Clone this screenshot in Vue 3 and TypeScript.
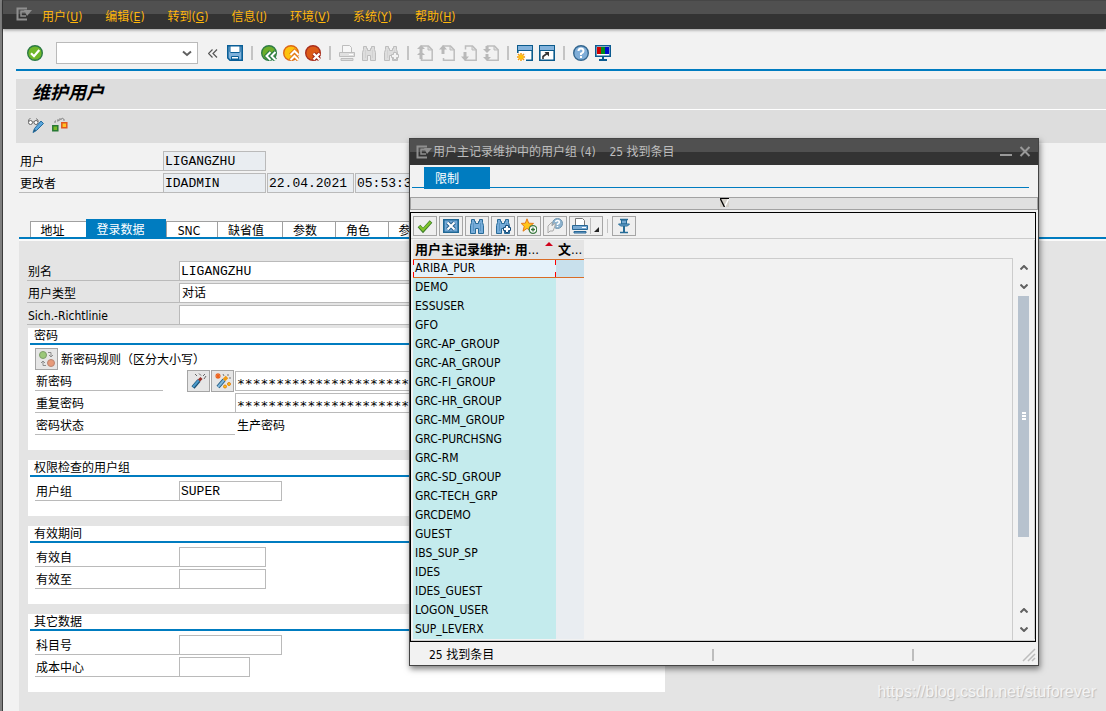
<script setup lang="ts">
import { ref } from 'vue'

const page = '<path d="M4.500 4.500V1h7l3.700 3.700V15.200h-10.700V13" fill="#f2f2f2" stroke="#bdbdbd" stroke-width="1.500"/><path d="M11 1v4h4z" fill="#dcdcdc" stroke="#bdbdbd"/>'
const binoculars = '<path d="M2.500 1.500h3v2h1v2h3v-2h1v-2h3v3l1 3v8h-5v-5h-3v5h-5v-8l1-3z"/><path d="M4.500 5v8M11.500 5v8" stroke-opacity=".35"/>'

const icons: Record<string, string> = {
  menu: '<path d="M11 1.500H1.500v11H11M4.500 4.500h5" fill="none" stroke="#8f8f8f" stroke-width="2"/><path d="M5 4.500V9h5" fill="none" stroke="#8f8f8f" stroke-width="1.500"/><path d="M8 3h8l-5 6z" fill="#8f8f8f"/>',
  ok: '<circle cx="8" cy="8" r="7.300" fill="#6fb72b" stroke="#2c7a45" stroke-width="1.400"/><path d="M4 8.200l3 3L12.300 5" fill="none" stroke="#fff" stroke-width="2.200"/>',
  save: '<path d="M.8.8h14.400v14.400H3L.8 13z" fill="#7fb1da" stroke="#0a5f97" stroke-width="1.600"/><path d="M3 1h10v5.500q0 1-1 1H4q-1 0-1-1z" fill="#fff" stroke="#0a5f97"/><path d="M4.500 11.500h7V15h-7z" fill="#fff" stroke="#0a5f97"/><path d="M4 14.500h8" stroke="#0a5f97" stroke-width="2"/>',
  back: '<circle cx="8" cy="8" r="7.300" fill="#6cae2a" stroke="#2f7c46" stroke-width="1.400"/><path d="M9.500 6.500L5.500 11l4 4M14.500 6.500l-4 4.500 4 4" fill="none" stroke="#287a42" stroke-width="4"/><path d="M9.500 7l-4 4 4 4M14.500 7l-4 4 4 4" fill="none" stroke="#fff" stroke-width="2"/>',
  exit: '<circle cx="8" cy="8" r="7.300" fill="#fdc20d" stroke="#dd6716" stroke-width="1.400"/><path d="M7.500 10l4-4 4 4M7.500 15l4-4 4 4" fill="none" stroke="#e27a16" stroke-width="4"/><path d="M7.500 10l4-4 4 4M7.500 15l4-4 4 4" fill="none" stroke="#fff" stroke-width="2"/>',
  cancel: '<circle cx="8" cy="8" r="7.300" fill="#dc5b17" stroke="#a92e1d" stroke-width="1.400"/><path d="M8.500 8.500l6 6M14.500 8.500l-6 6" fill="none" stroke="#9f291a" stroke-width="4.200"/><path d="M8.500 8.500l6 6M14.500 8.500l-6 6" fill="none" stroke="#fff" stroke-width="2.300"/>',
  print: '<path d="M3.500 7V.5h7l2 2V7" fill="#f7f7f7" stroke="#bdbdbd"/><path d="M.5 7.500h15v4H.5z" fill="#e0e0e0" stroke="#bdbdbd"/><path d="M2 13.500h12v2H2z" fill="#ddd" stroke="#bdbdbd"/><path d="M10 9.500h4" stroke="#fff"/>',
  find: `<g fill="#ddd" stroke="#bdbdbd">${binoculars}</g>`,
  findNext: `<g fill="#ddd" stroke="#bdbdbd">${binoculars}<path d="M10.500 7.500h3v2h2v3h-2v2h-3v-2h-2v-3h2z" fill="#f4f4f4"/></g>`,
  first: `${page}<path d="M4 0l4 4H5.500v3h-3V4H0zM4 6l4 4H5.500v4h-3v-4H0z" fill="#b9b9b9"/>`,
  previous: `${page}<path d="M4 0l4 4.500H5.500V9h-3V4.500H0z" fill="#b9b9b9"/>`,
  next: `${page}<path d="M4 16L0 11.500h2.500V7h3v4.500H8z" fill="#b9b9b9"/>`,
  last: `${page}<path d="M4 8L0 4h2.500V1h3v3H8zM4 16l-4-4h2.500V9h3v3H8z" fill="#b9b9b9"/>`,
  session: '<path d="M.8.8h14.400v14.400H.8z" fill="#fff" stroke="#0c5b8c" stroke-width="1.600"/><path d="M1 1h14v4H1z" fill="#83b3dc"/><path d="M1 5.500h14" stroke="#0c5b8c"/><path d="M0 8h9v8H0z" fill="#fafafa"/><path d="M4 8v8M0 12h8M1 9l6 6M7 9l-6 6" stroke="#f29a0c" stroke-width="1.500"/><circle cx="4" cy="12" r="2.300" fill="#ffc20c"/>',
  shortcut: '<path d="M.8.8h14.400v14.400H.8z" fill="#fff" stroke="#0c5b8c" stroke-width="1.600"/><path d="M1 1h14v4H1z" fill="#83b3dc"/><path d="M1 5.500h14" stroke="#0c5b8c"/><path d="M4 14v-2.500L8 8.500" fill="none" stroke="#333" stroke-width="1.600"/><path d="M5.500 7H10v4.500z" fill="#333"/>',
  help: '<circle cx="8" cy="8" r="7.300" fill="#80aed8" stroke="#34678f" stroke-width="1.400"/><path d="M5.500 6q0-2.500 2.500-2.500T10.500 6Q10.500 7.500 8 8.700V10M8 11v2" fill="none" stroke="#fff" stroke-width="2"/>',
  monitor: '<path d="M.8.8h14.400v10.400H.8z" fill="#fff" stroke="#0b5b90" stroke-width="1.600"/><path d="M2 2h4v7H2z" fill="#d00000"/><path d="M6 2h4v7H6z" fill="#008c1a"/><path d="M10 2h4v7h-4z" fill="#000bc9"/><path d="M8 11v3M4 15h8" stroke="#0b5b90" stroke-width="2"/>',
  glasses: '<circle cx="2.500" cy="5.500" r="2" fill="#fff" stroke="#666"/><circle cx="8" cy="5.500" r="2" fill="#fff" stroke="#666"/><path d="M.5 5V3l2-2M4.500 5h1.500M10 5V3L8 1.500" fill="none" stroke="#777"/><path d="M13 4l2.500 2.500-7 7-3.500 2 1.500-4z" fill="#5ba6dc" stroke="#236b9d"/><path d="M5.500 14.800l1.400-2.500 1 1.200z" fill="#174461"/>',
  other: '<path d="M3 6V4h3V2h6v4M6 4l5-3" fill="none" stroke="#888" stroke-dasharray="3 1"/><path d="M.8 8.800h5v5h-5z" fill="#78b928" stroke="#287934" stroke-width="1.500"/><path d="M9.800 5.800h5v5h-5z" fill="#ffc425" stroke="#e1571d" stroke-width="1.500"/>',
  rules: '<circle cx="4" cy="4" r="3.500" fill="#9bc879" stroke="#7c9d68"/><circle cx="12" cy="12" r="3.500" fill="#e79a79" stroke="#b98472"/><path d="M9 1.500h3v4M10 4l2 2 2-2M7 14.500H4v-4M2 12l2-2 2 2" fill="none" stroke="#8c8c8c"/>',
  wand: '<path d="M2 14.500l6-7" stroke="#184f73" stroke-width="4"/><path d="M2 14l6-7" stroke="#4b9aca" stroke-width="2"/><path d="M8 7.500L10.500 5" stroke="#963028" stroke-width="3"/><path d="M4 1l2 2M8 .5l2 2M12 3l2-2M13 6l2-3" stroke="#666"/>',
  generate: '<path d="M3 14l6-7" stroke="#245e86" stroke-width="4"/><path d="M3 14l6-7" stroke="#80b8dc" stroke-width="2"/><path d="M9 7l3-3" stroke="#f09a13" stroke-width="3.500"/><path d="M3 0v6M0 3h6M1 1l4 4M5 1L1 5" stroke="#ed641f" stroke-width="1.200"/><path d="M8 1l1 2M13 1v2M14 5h2" stroke="#777"/><circle cx="10" cy="13.500" r="1.500" fill="#ffc20c" stroke="#e0841b"/><circle cx="14" cy="11" r="1.500" fill="#ffc20c" stroke="#e0841b"/>',
  tick: '<path d="M2 8l4 4.500L14 3.500" fill="none" stroke="#40802b" stroke-width="3.600"/><path d="M2.500 8.300L6 12l7.500-8" fill="none" stroke="#82c52b" stroke-width="2"/>',
  close: '<path d="M.8 1.800h14.400v12.400H.8z" fill="#72a8d6" stroke="#1f6794" stroke-width="1.600"/><path d="M4.500 4.500l7 7M11.500 4.500l-7 7" stroke="#2b628e" stroke-width="4"/><path d="M4.500 4.500l7 7M11.500 4.500l-7 7" stroke="#fff" stroke-width="2"/>',
  findBlue: `<g fill="#76acd9" stroke="#286b98">${binoculars}</g>`,
  findNextBlue: `<g fill="#76acd9" stroke="#286b98">${binoculars}<path d="M10.500 7.500h3v2h2v3h-2v2h-3v-2h-2v-3h2z" fill="#fff" stroke="#164c7b"/></g>`,
  favorite: '<path d="M6 .8l1.700 4.400 4.800.2-3.700 3 1.300 4.800L6 10.400 2 13.200l1.200-4.800-3-3 4.100-.2z" fill="#ffc51b" stroke="#e57918"/><circle cx="12" cy="11.500" r="3.800" fill="#fff" stroke="#3d7b43" stroke-width="1.300"/><path d="M12 9.500v4M10 11.500h4" stroke="#347338" stroke-width="1.300"/>',
  contextHelp: '<circle cx="10.500" cy="5.500" r="5" fill="#8fb4cf" stroke="#7096b0"/><path d="M8.700 4q0-1.500 1.800-1.500T12.300 4.200q0 1-1.800 2V7M10.500 8v1" fill="none" stroke="#fff" stroke-width="1.500"/><path d="M1 14V8l4-4v4l3-3v3l-2 5H3l-2 2z" fill="#eee" stroke="#aaa"/>',
  printBlue: '<path d="M3.500 7V.5h7l2 2V7" fill="#fff" stroke="#777"/><path d="M.5 7.500h15v4H.5z" fill="#78a9d2" stroke="#286795"/><path d="M2 13.500h12v1.500H2z" fill="#79a9d4" stroke="#286795"/><path d="M10 9.500h4" stroke="#fff"/>',
  pin: '<path d="M5.500 2v4h5V2z" fill="#75a9d2" stroke="#246b96"/><path d="M4 1.500h8" stroke="#246b96" stroke-width="1.500"/><path d="M2.500 6l2 2h7l2-2z" fill="#75a9d2" stroke="#246b96"/><path d="M8 8v6" stroke="#246b96" stroke-width="2"/><path d="M4 14.500h8" stroke="#246b96" stroke-width="1.500"/>',
}

const menus = [
  ['用户', 'U'], ['编辑', 'E'], ['转到', 'G'], ['信息', 'I'], ['环境', 'V'], ['系统', 'Y'], ['帮助', 'H'],
]
const toolGroups = [
  [['save', '保存']],
  [['back', '返回'], ['exit', '退出'], ['cancel', '取消']],
  [['print', '打印'], ['find', '查找'], ['findNext', '查找下一个']],
  [['first', '第一页'], ['previous', '上一页'], ['next', '下一页'], ['last', '最后一页']],
  [['session', '新建会话'], ['shortcut', '创建快捷方式']],
  [['help', '帮助'], ['monitor', '本地布局']],
]
const tabs = [
  { text: '地址', cls: 'w56' }, { text: '登录数据', cls: 'w80' }, { text: 'SNC', cls: 'w51' },
  { text: '缺省值', cls: 'w65' }, { text: '参数', cls: 'w53' }, { text: '角色', cls: 'w53' }, { text: '参数文件', cls: 'w80' },
]
const activeTab = ref('登录数据')

const lowerGroups = [
  { title: '权限检查的用户组', fields: [{ id: 'group', label: '用户组', value: 'SUPER', cls: 'wide' }] },
  { title: '有效期间', fields: [{ id: 'from', label: '有效自', value: '', cls: 'date' }, { id: 'to', label: '有效至', value: '', cls: 'date' }] },
  { title: '其它数据', fields: [{ id: 'account', label: '科目号', value: '', cls: 'wide' }, { id: 'cost', label: '成本中心', value: '', cls: 'short' }] },
]
const stars = '*'.repeat(40)

const dialogTitle = '用户主记录维护中的用户组 (4)    25 找到条目'
const hitTools = [
  ['tick', '复制'], ['close', '关闭'], ['findBlue', '查找'], ['findNextBlue', '查找下一个'], ['favorite', '添加到收藏'], ['contextHelp', '帮助'],
]
const rows = [
  'ARIBA_PUR', 'DEMO', 'ESSUSER', 'GFO', 'GRC-AP_GROUP', 'GRC-AR_GROUP', 'GRC-FI_GROUP', 'GRC-HR_GROUP', 'GRC-MM_GROUP',
  'GRC-PURCHSNG', 'GRC-RM', 'GRC-SD_GROUP', 'GRC-TECH_GRP', 'GRCDEMO', 'GUEST', 'IBS_SUP_SP', 'IDES', 'IDES_GUEST',
  'LOGON_USER', 'SUP_LEVERX',
]
const selected = ref('ARIBA_PUR')
</script>

<template>
  <div class="app">
    <nav class="menubar">
      <svg class="menu-icon" viewBox="0 0 16 14" v-html="icons.menu"></svg>
      <button v-for="m in menus" :key="m[1]" class="menu">{{ m[0] }}(<u>{{ m[1] }}</u>)</button>
    </nav>

    <div class="main">
      <div class="toolbar">
        <button class="tool ok" aria-label="确认"><svg viewBox="0 0 16 16" v-html="icons.ok"></svg></button>
        <div class="combo">
          <select aria-label="命令"><option></option></select>
          <svg viewBox="0 0 10 7"><path d="M1 1.500l4 3.500 4-3.500" fill="none" stroke="#606060" stroke-width="2" /></svg>
        </div>
        <button class="collapse" aria-label="收起">
          <svg viewBox="0 0 10 9"><path d="M4.500 .5l-4 4 4 4M9 .5l-4 4 4 4" fill="none" stroke="#555" stroke-width="1.200" /></svg>
        </button>
        <template v-for="(g, i) in toolGroups" :key="i">
          <span v-if="i > 0" class="sep"></span>
          <button v-for="t in g" :key="t[0]" class="tool" :aria-label="t[1]"><svg viewBox="0 0 16 16" v-html="icons[t[0]]"></svg></button>
        </template>
      </div>

      <header class="heading"><h1>维护用户</h1></header>
      <div class="actions">
        <button class="tool" aria-label="显示/更改"><svg viewBox="0 0 16 16" v-html="icons.glasses"></svg></button>
        <button class="tool" aria-label="其他用户"><svg viewBox="0 0 16 16" v-html="icons.other"></svg></button>
      </div>

      <section class="identity">
        <div class="row"><label for="user">用户</label><input id="user" class="ro wide" value="LIGANGZHU" readonly /></div>
        <div class="row">
          <label for="changed">更改者</label><input id="changed" class="ro wide" value="IDADMIN" readonly />
          <input class="ro date next" aria-label="更改日期" value="22.04.2021" readonly />
          <input class="ro date next" aria-label="更改时间" value="05:53:39" readonly />
        </div>
      </section>

      <div class="tabs" role="tablist">
        <button
          v-for="t in tabs" :key="t.text" role="tab" class="tab" :class="[t.cls, { active: t.text === activeTab }]"
          :aria-selected="t.text === activeTab" @click="activeTab = t.text"
        >{{ t.text }}</button>
      </div>

      <section class="panel">
        <div class="top-fields">
          <div class="row"><label for="alias">别名</label><input id="alias" class="full" value="LIGANGZHU" /></div>
          <div class="row">
            <label for="type">用户类型</label>
            <select id="type" class="full"><option>对话</option></select>
          </div>
          <div class="row"><label for="policy">Sich.-Richtlinie</label><input id="policy" class="full" /></div>
        </div>

        <fieldset class="group">
          <legend>密码</legend>
          <div class="rules">
            <button class="square" aria-label="切换密码规则"><svg viewBox="0 0 16 16" v-html="icons.rules"></svg></button>
            <span>新密码规则（区分大小写）</span>
          </div>
          <div class="row new-password">
            <label for="pw1">新密码</label>
            <div class="pw-tools">
              <button class="square" aria-label="向导"><svg viewBox="0 0 16 16" v-html="icons.wand"></svg></button>
              <button class="square" aria-label="生成密码"><svg viewBox="0 0 16 16" v-html="icons.generate"></svg></button>
            </div>
            <input id="pw1" class="full secret" :value="stars" />
          </div>
          <div class="row long"><label for="pw2">重复密码</label><input id="pw2" class="full secret" :value="stars" /></div>
          <div class="row long"><span class="label">密码状态</span><span class="plain">生产密码</span></div>
        </fieldset>

        <fieldset v-for="g in lowerGroups" :key="g.title" class="group">
          <legend>{{ g.title }}</legend>
          <div class="fields">
            <div v-for="f in g.fields" :key="f.id" class="row">
              <label :for="f.id">{{ f.label }}</label><input :id="f.id" :class="f.cls" :value="f.value" />
            </div>
          </div>
        </fieldset>
      </section>
    </div>

    <div class="dialog" role="dialog" aria-labelledby="dialog-title">
      <div class="titlebar">
        <svg class="menu-icon" viewBox="0 0 16 14" v-html="icons.menu"></svg>
        <span id="dialog-title" class="title">{{ dialogTitle }}</span>
        <button aria-label="最小化"><svg viewBox="0 0 12 12"><path d="M0 9h12" stroke="#999" stroke-width="2" /></svg></button>
        <button aria-label="关闭"><svg viewBox="0 0 12 12"><path d="M1.500 1l9 9M10.500 1l-9 9" stroke="#999" stroke-width="2" /></svg></button>
      </div>
      <div class="restrict"><button>限制</button></div>
      <button class="splitter" aria-label="展开限制">
        <svg viewBox="0 0 9 9"><path d="M0 0h9v9H0z" fill="#d4d0c8" /><path d="M8.500 1l-4 8" stroke="#fff" stroke-width="1.500" /><path d="M.5 1l4 8" stroke="#000" stroke-width="1.300" /><path d="M0 .5h9" stroke="#000" /></svg>
      </button>

      <div class="hits">
        <div class="hit-tools">
          <button v-for="t in hitTools" :key="t[0]" class="square" :aria-label="t[1]"><svg viewBox="0 0 16 16" v-html="icons[t[0]]"></svg></button>
          <button class="square print" aria-label="打印">
            <svg viewBox="0 0 16 16" v-html="icons.printBlue"></svg>
            <svg class="corner" viewBox="0 0 12 16"><path d="M1.500 0v16" stroke="#bbb" /><path d="M10 9v5H5z" fill="#222" /></svg>
          </button>
          <span class="sep"></span>
          <button class="square" aria-label="固定"><svg viewBox="0 0 16 16" v-html="icons.pin"></svg></button>
        </div>
        <div class="list">
          <table>
            <thead>
              <tr>
                <th class="c1"><div><span>用户主记录维护: 用<span class="dots">...</span></span><svg viewBox="0 0 8 4"><path d="M0 4l4-4 4 4z" fill="#d0021b" /></svg></div></th>
                <th class="c2">文<span class="dots">...</span></th>
              </tr>
            </thead>
            <tbody>
              <tr v-for="r in rows" :key="r" :class="{ selected: r === selected }" @click="selected = r"><td>{{ r }}</td><td></td></tr>
            </tbody>
          </table>
          <div class="rest"></div>
          <div class="scroll">
            <button aria-label="到顶部"><svg viewBox="0 0 8 5"><path d="M.5 4.500L4 1l3.500 3.500" fill="none" stroke="#606060" stroke-width="2" /></svg></button>
            <button aria-label="向下"><svg viewBox="0 0 8 5"><path d="M.5 .5L4 4 7.500 .5" fill="none" stroke="#606060" stroke-width="2" /></svg></button>
            <div class="track"><div class="thumb"><i></i><i></i><i></i></div></div>
            <button aria-label="向上"><svg viewBox="0 0 8 5"><path d="M.5 4.500L4 1l3.500 3.500" fill="none" stroke="#606060" stroke-width="2" /></svg></button>
            <button aria-label="到底部"><svg viewBox="0 0 8 5"><path d="M.5 .5L4 4 7.500 .5" fill="none" stroke="#606060" stroke-width="2" /></svg></button>
          </div>
        </div>
      </div>

      <footer class="status">
        <span class="message">25 找到条目</span><span class="mark"></span><span class="mark far"></span>
        <svg viewBox="0 0 14 14"><path d="M1 13L13 1M6 13l7-7M10 13l3-3" stroke="#bdbdbd" stroke-width="1.500" /></svg>
      </footer>
    </div>

    <div class="watermark">https://blog.csdn.net/stuforever</div>
  </div>
</template>

<style>
body {
  background: #f2f2f2;
  overflow: hidden;
}
</style>

<style scoped>
.app {
  position: relative;
  display: flex;
  flex-direction: column;
  min-height: 100vh;
  box-sizing: border-box;
  padding-left: 3px;
  background: linear-gradient(90deg, #808080 0 2px, #3c3c3c 2px 3px, #f2f2f2 3px);
  color: #000;
  font: 12px/16px "DejaVu Sans Condensed", "Noto Sans CJK SC", sans-serif;
}
.app * { box-sizing: border-box; }
button { padding: 0; border: 0; background: none; color: inherit; font: inherit; }
svg { display: block; }
input, select {
  height: 20px;
  padding: 0 2px;
  border: 1px solid #bababa;
  border-radius: 0;
  outline: 0;
  background: #fff;
  color: #000;
  font: 13px/16px "Liberation Mono", "Noto Sans CJK SC", monospace;
}
input { padding-left: 1px; }
select { appearance: none; font: inherit; }

.menubar {
  display: flex;
  align-items: center;
  gap: 23px;
  height: 29px;
  padding: 5px 0 0 13px;
  background: linear-gradient(#464646 0 1px, #505050 1px 14px, #333 14px);
  box-shadow: 0 1px 3px rgb(0 0 0 / 40%);
  color: #ffb60c;
}
.menu-icon { width: 16px; height: 14px; flex: none; }
.menubar .menu-icon { margin: 0 -13px 7px 0; }

.main { flex: 1; display: flex; flex-direction: column; padding-left: 13px; }
.toolbar {
  display: flex;
  align-items: center;
  gap: 6px;
  height: 42px;
  padding: 8px 0 0 11px;
  border-bottom: 2px solid #007cc0;
}
.tool { width: 16px; height: 16px; flex: none; }
.ok { margin-right: 7px; }
.combo { display: grid; width: 142px; align-items: center; }
.combo select, .combo svg { grid-area: 1 / 1; }
.combo select { width: 100%; height: 22px; }
.combo svg { justify-self: end; width: 10px; height: 7px; margin-right: 6px; pointer-events: none; }
.collapse { margin: 0 3px 0 4px; }
.collapse svg { width: 10px; height: 9px; }
.sep { width: 2px; height: 14px; margin: 0 2px; background: #c4c4c4; }

.heading { height: 30px; margin-top: 8px; padding: 1px 0 0 16px; background: #ddd; }
h1 { margin: 0; font: italic bold 18px/22px "Noto Sans CJK SC", sans-serif; }
.actions {
  display: flex;
  gap: 8px;
  height: 34px;
  padding: 7px 0 0 12px;
  border-top: 1px solid #fff;
  background: #ddd;
}

.row { display: flex; height: 22px; }
.row label, .label {
  flex: none;
  width: 144px;
  height: 20px;
  padding: 3px 0 0 1px;
  border-bottom: 1px solid #bababa;
  line-height: 16px;
}
.wide { width: 103px; }
.date { width: 87px; }
.short { width: 71px; }
.full { flex: 1; min-width: 0; }
.next { margin-left: 1px; }
.ro { background: #e9edf1; }
.identity { margin: 8px 0 24px 3px; }

.tabs {
  display: flex;
  align-items: flex-end;
  height: 20px;
  margin-left: 3px;
  padding-left: 11px;
  border-bottom: 2px solid #007cc0;
}
.tab { height: 16px; padding-top: 1px; border: solid #a0a0a0; border-width: 1px 0 0 1px; background: #fff; }
.tab.active { height: 18px; padding-top: 2px; border-color: #007cc0; background: #007cc0; color: #fff; }
.w56 { width: 56px; padding-right: 12px; }
.w80 { width: 80px; padding-right: 12px; }
.w51 { width: 51px; padding-right: 6px; }
.w65 { width: 65px; padding-right: 8px; }
.w53 { width: 53px; padding-right: 8px; }

.panel { flex: 1; margin-left: 3px; padding: 20px 0 19px 9px; border-top: 2px solid #fafafa; background: #e4e4e4; }
.top-fields { width: 638px; max-width: 100%; margin-left: -1px; }
.top-fields label { width: 152px; }
.group { width: 637px; max-width: 100%; margin: 0 0 10px; padding: 0 0 13px 7px; border: 0; background: #fff; }
.top-fields + .group { margin-top: 1px; }
.group:last-child { margin-bottom: 0; }
legend {
  float: left;
  width: calc(100% + 5px);
  height: 17px;
  margin: 0 0 3px -5px;
  padding: 1px 0 0 4px;
  border-bottom: 2px solid #007cc0;
  line-height: 14px;
}
legend + * { clear: both; }
.fields { padding-top: 1px; }
.rules { display: flex; align-items: center; gap: 3px; height: 22px; }
.rules span { padding-top: 2px; }
.square {
  display: flex;
  align-items: center;
  justify-content: center;
  flex: none;
  width: 23px;
  height: 22px;
  border: 1px solid #a5a5a5;
  background: #e6e6e6;
}
.square svg { width: 16px; height: 16px; }
.new-password { padding-top: 1px; height: 23px; }
.new-password label { width: 128px; }
.pw-tools { display: flex; gap: 1px; margin: -1px 1px 0 24px; }
.long label, .long .label { width: 200px; }
.secret { padding-top: 4px; font: 13px/16px "DejaVu Sans Mono", monospace; }
.plain { padding: 3px 0 0 2px; }

.dialog {
  position: absolute;
  top: 138px;
  left: 409px;
  right: 67px;
  border: 1px solid #444;
  background: #f2f2f2;
  box-shadow: 1px 3px 6px rgb(0 0 0 / 50%);
}
.titlebar {
  display: flex;
  align-items: center;
  gap: 7px;
  height: 26px;
  padding: 0 7px 0 6px;
  background: linear-gradient(#505050 0 13px, #333 13px);
  color: #bdbdbd;
}
.titlebar .title { flex: 1; margin-left: -6px; white-space: pre; }
.titlebar button svg { width: 12px; height: 12px; }
.restrict { height: 23px; margin: 0 9px 9px 2px; padding: 2px 0 0 12px; border-bottom: 1px solid #007cc0; }
.restrict button { width: 66px; height: 22px; padding: 2px 20px 0 0; background: #007cc0; color: #fff; }
.splitter {
  display: flex;
  justify-content: center;
  width: 100%;
  height: 13px;
  border: 1px solid #a2a2a2;
  background: #e0e0e0;
}
.splitter svg { flex: none; width: 9px; height: 9px; }
.hits { margin: 2px 2px 0 0; border: 1px solid #000; }
.hit-tools {
  display: flex;
  align-items: center;
  gap: 2px;
  height: 26px;
  padding-left: 2px;
  border-bottom: 1px solid #ccc;
}
.hit-tools .square { width: 24px; height: 20px; background: #efefef; }
.hit-tools .print { width: 34px; gap: 1px; }
.hit-tools .print .corner { width: 12px; }
.hit-tools .sep { width: 1px; margin: 0 2px; }
.list { display: flex; padding: 1px 0 1px 2px; border-bottom: 1px solid #ccc; }
table { width: 171px; flex: none; border-collapse: separate; border-spacing: 0; table-layout: fixed; }
th { height: 19px; padding: 0 0 0 2px; background: #e4e4e4; text-align: left; font: bold 13px/19px "DejaVu Sans Condensed", "Noto Sans CJK SC", sans-serif; white-space: nowrap; overflow: hidden; }
.dots { font-weight: normal; }
.c1 { width: 143px; }
.c1 div { display: flex; justify-content: space-between; }
.c1 svg { width: 8px; height: 4px; margin: 2px 3px 0 0; }
td { height: 19px; padding: 0 0 0 2px; background: #e9edf1; line-height: 17px; }
td:first-child { background: #c4ebed; }
.selected td { border: solid #d96c26; border-width: 1px 0; background: #c8e0ec; }
.selected td:first-child {
  background:
    linear-gradient(red, red) 0 0 / 1px 5px no-repeat,
    linear-gradient(red, red) 0 100% / 1px 5px no-repeat,
    linear-gradient(red, red) 100% 0 / 1px 5px no-repeat,
    linear-gradient(red, red) 100% 100% / 1px 5px no-repeat,
    #e5f2fa;
}
.rest { flex: 1; margin: 18px 0 -1px; border: solid #ccc; border-width: 1px 1px 0 0; }
.scroll { display: flex; flex-direction: column; align-items: center; width: 22px; padding-top: 18px; border-right: 1px solid #ccc; }
.scroll button { display: flex; align-items: center; justify-content: center; width: 100%; height: 19px; }
.scroll svg { width: 8px; height: 5px; }
.track { flex: 1; width: 11px; }
.thumb {
  display: flex;
  flex-direction: column;
  align-items: center;
  justify-content: center;
  gap: 1px;
  height: 79%;
  background: #b7c2ce;
}
.thumb i { width: 4px; height: 2px; background: #fff; }
.status { display: flex; align-items: center; height: 23px; padding: 3px 2px 0 19px; }
.message { width: 283px; }
.mark { width: 2px; height: 12px; background: #bdbdbd; }
.far { margin-left: 198px; }
.status svg { width: 14px; height: 14px; margin-left: auto; }

.watermark {
  position: absolute;
  right: 10px;
  bottom: 10px;
  color: #f4f4f4;
  font: 16px/18px "Liberation Sans", sans-serif;
  text-shadow: 1px 1px 1px #bbb;
}
</style>
